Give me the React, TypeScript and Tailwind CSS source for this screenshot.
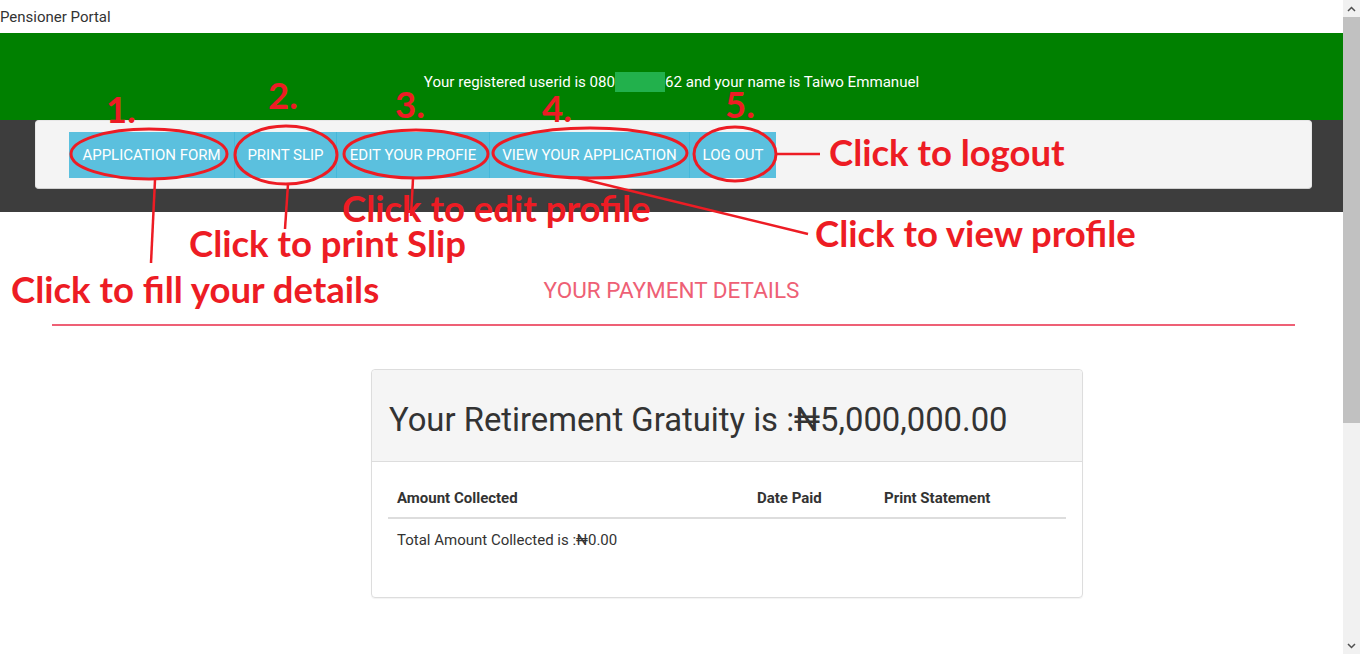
import React from "react";

const red = "#ed1c24";

function Note({ text, left, top, size = 36.5 }: { text: string; left: number; top: number; size?: number }) {
  return (
    <div
      className="absolute whitespace-nowrap font-bold leading-[0.8] text-[#ed1c24]"
      style={{ left, top, fontSize: size, fontFamily: "Lato, 'Open Sans', sans-serif" }}
    >
      {text}
    </div>
  );
}

export default function App() {
  const buttons: [string, string][] = [
    ["APPLICATION FORM", "w-[165px]"],
    ["PRINT SLIP", "w-[102px]"],
    ["EDIT YOUR PROFIE", "w-[153px]"],
    ["VIEW YOUR APPLICATION", "w-[200px]"],
    ["LOG OUT", "w-[87px]"],
  ];
  return (
    <div
      className="flex h-[654px] w-[1360px] overflow-hidden bg-white text-[#333]"
      style={{ fontFamily: "Roboto, 'Liberation Sans', sans-serif" }}
    >
      <div className="relative w-[1343px] shrink-0">
        <div className="h-[33px] pt-[1px] text-[15px] leading-[33px]">Pensioner Portal</div>
        <div className="h-[87px] bg-[#008000] pt-[41px] text-center text-[15.1px] leading-[16px] text-white">
          Your registered userid is 080
          <span className="inline-block h-[20px] w-[50px] -translate-y-[2px] bg-[#22b14c] align-top" />
          62 and your name is Taiwo Emmanuel
        </div>
        <div className="h-[92px] bg-[#3d3d3d]">
          <div className="ml-[35px] h-[69px] w-[1277px] rounded-[4px] border border-[#e7e7e7] border-b-[#d0d0d0] bg-[#f4f4f4] pl-[33px] pt-[11px]">
            <div className="flex">
              {buttons.map(([label, w], i) => (
                <div
                  key={label}
                  className={`${w} flex h-[46px] items-center justify-center bg-[#5bc0de] text-[15px] text-white ${
                    i > 0 ? "border-l border-[#46b8da]" : ""
                  }`}
                >
                  {label}
                </div>
              ))}
            </div>
          </div>
        </div>
        <div className="pt-[65px] text-center text-[22.5px] leading-[26px] text-[#ee6075]">YOUR PAYMENT DETAILS</div>
        <div className="ml-[52px] mt-[21px] h-[2px] w-[1243px] bg-[#ee6075]" />
        <div className="ml-[371px] mt-[43px] h-[229px] w-[712px] rounded-[4px] border border-[#dddddd] shadow-[0_1px_1px_rgba(0,0,0,0.05)]">
          <div className="h-[92px] rounded-t-[4px] border-b border-[#dddddd] bg-[#f5f5f5] pl-[17px] pt-[32px] text-[32.8px] leading-[36px] text-[#333]">
            Your Retirement Gratuity is :₦5,000,000.00
          </div>
          <div className="px-[16px] pt-[17px]">
            <div className="grid grid-cols-[360px_127px_190px] border-b-2 border-[#dddddd] text-[15px] font-bold leading-[22px]">
              <div className="px-[9px] py-[8px]">Amount Collected</div>
              <div className="px-[9px] py-[8px]">Date Paid</div>
              <div className="px-[9px] py-[8px]">Print Statement</div>
            </div>
            <div className="px-[9px] pt-[10px] text-[15px] leading-[22px]">Total Amount Collected is :₦0.00</div>
          </div>
        </div>

        {/* annotations */}
        <svg className="pointer-events-none absolute left-0 top-0" width="1343" height="654" fill="none" stroke={red} strokeWidth="3">
          <ellipse cx="149" cy="154" rx="78" ry="25" />
          <ellipse cx="286" cy="155" rx="51" ry="29" />
          <ellipse cx="416" cy="154" rx="72" ry="24" />
          <ellipse cx="590" cy="153" rx="97" ry="25" />
          <ellipse cx="735" cy="154" rx="41" ry="27" />
          <line x1="155" y1="180" x2="151" y2="263" strokeWidth="2.5" />
          <line x1="288" y1="184" x2="285" y2="229" strokeWidth="2.5" />
          <line x1="413" y1="179" x2="411" y2="216" strokeWidth="2.5" />
          <line x1="578" y1="178" x2="808" y2="234" strokeWidth="2.5" />
          <line x1="777" y1="154" x2="820" y2="154" strokeWidth="2.5" />
        </svg>
        <Note text="1." left={106} top={95} />
        <Note text="2." left={268} top={81} />
        <Note text="3." left={395} top={90} />
        <Note text="4." left={542} top={94} />
        <Note text="5." left={725} top={90} />
        <Note text="Click to logout" left={829} top={138} />
        <Note text="Click to edit profile" left={342} top={194} />
        <Note text="Click to print Slip" left={189} top={229} />
        <Note text="Click to view profile" left={815} top={219} />
        <Note text="Click to fill your details" left={11} top={275} />
      </div>
      <div className="flex w-[17px] shrink-0 flex-col bg-[#f1f1f1]">
        <div className="flex h-[17px] items-center justify-center">
          <svg width="9" height="6" viewBox="0 0 9 6" fill="none" stroke="#505050" strokeWidth="1.5">
            <path d="M1 5 L4.5 1.5 L8 5" />
          </svg>
        </div>
        <div className="h-[406px] bg-[#c1c1c1]" />
        <div className="flex-1" />
        <div className="flex h-[17px] items-center justify-center">
          <svg width="9" height="6" viewBox="0 0 9 6" fill="none" stroke="#505050" strokeWidth="1.5">
            <path d="M1 1 L4.5 4.5 L8 1" />
          </svg>
        </div>
      </div>
    </div>
  );
}
